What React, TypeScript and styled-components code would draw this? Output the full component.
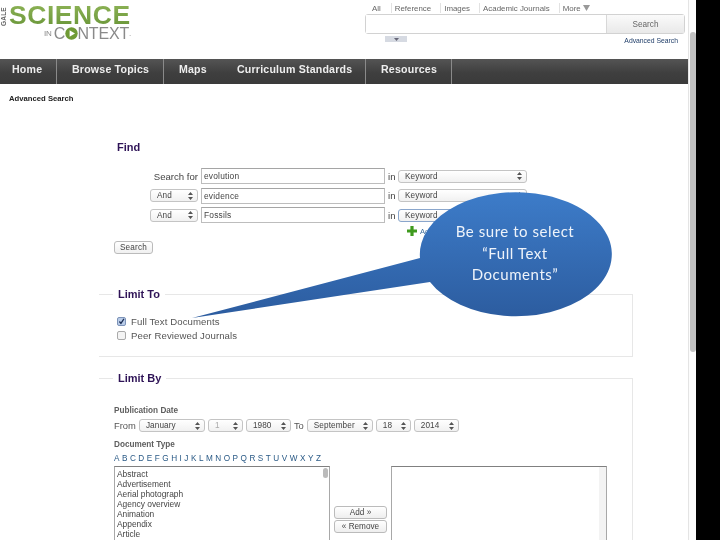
import React from 'react'
import styled, { createGlobalStyle } from 'styled-components'

const Global = createGlobalStyle`
  html, body { margin: 0; padding: 0; background: #000; overflow: hidden; }
  body { font-family: "Liberation Sans", Arial, sans-serif; color: #333; }
  * { box-sizing: border-box; }
`

const tabs = ['Reference', 'Images', 'Academic Journals']
const navItems = [
  { label: 'Home', width: 57 },
  { label: 'Browse Topics', width: 107 },
  { label: 'Maps', width: 58, plain: true },
  { label: 'Curriculum Standards', width: 144 },
  { label: 'Resources', width: 86 },
]
const letters = 'ABCDEFGHIJKLMNOPQRSTUVWXYZ'.split('')
const docTypes = ['Abstract', 'Advertisement', 'Aerial photograph', 'Agency overview', 'Animation', 'Appendix', 'Article']

function Arrows() {
  return (
    <svg width="5" height="8" viewBox="0 0 5 8">
      <path d="M2.5 0 L5 3 H0 Z M2.5 8 L5 5 H0 Z" fill="#555" />
    </svg>
  )
}

function Select({ value, width, focus, muted }: { value: string; width: number; focus?: boolean; muted?: boolean }) {
  return (
    <SelectBox $width={width} $focus={focus} $muted={muted}>
      <span>{value}</span>
      <Arrows />
    </SelectBox>
  )
}

function QueryRow({ value, bool, focus }: { value: string; bool?: boolean; focus?: boolean }) {
  return (
    <Row>
      <RowLead>
        {bool ? <Select value="And" width={48} /> : <span>Search for</span>}
      </RowLead>
      <TermInput defaultValue={value} readOnly />
      <InWord>in</InWord>
      <Select value="Keyword" width={129} focus={focus} />
    </Row>
  )
}

export default function App() {
  return (
    <Screen>
      <Global />
      <Main>
        <Header>
          <Logo>
            <Gale>GALE</Gale>
            <LogoWords>
              <Science>SCIENCE</Science>
              <Context>
                <small>IN</small>C
                <svg width="13" height="13" viewBox="0 0 13 13">
                  <circle cx="6.5" cy="6.5" r="6.2" fill="#6f9a35" />
                  <path d="M4.6 3.2 L10 6.5 L4.6 9.8 Z" fill="#fff" />
                </svg>
                NTEXT<small>.</small>
              </Context>
            </LogoWords>
          </Logo>
          <SearchArea>
            <Tabs>
              <Tab $first>All</Tab>
              {tabs.map((t) => (
                <Tab key={t}>{t}</Tab>
              ))}
              <Tab>
                More
                <svg width="7" height="6" viewBox="0 0 7 6">
                  <path d="M0 0 H7 L3.5 6 Z" fill="#999" />
                </svg>
              </Tab>
            </Tabs>
            <SearchBox>
              <SearchField />
              <SearchButton>Search</SearchButton>
            </SearchBox>
            <SearchFoot>
              <DropTab>
                <svg width="5" height="3" viewBox="0 0 5 3">
                  <path d="M0 0 H5 L2.5 3 Z" fill="#667" />
                </svg>
              </DropTab>
              <AdvancedLink>Advanced Search</AdvancedLink>
            </SearchFoot>
          </SearchArea>
        </Header>

        <Nav>
          {navItems.map((n) => (
            <NavItem key={n.label} $width={n.width} $plain={n.plain}>
              {n.label}
            </NavItem>
          ))}
        </Nav>

        <Crumb>Advanced Search</Crumb>

        <Form>
          <FindTitle>Find</FindTitle>
          <Rows>
            <QueryRow value="evolution" />
            <QueryRow value="evidence" bool />
            <QueryRow value="Fossils" bool focus />
          </Rows>
          <AddRow>
            <svg width="10" height="10" viewBox="0 0 10 10">
              <path d="M3.4 0 H6.6 V3.4 H10 V6.6 H6.6 V10 H3.4 V6.6 H0 V3.4 H3.4 Z" fill="#3f9a1e" />
            </svg>
            <span>Add a Row</span>
          </AddRow>
          <GreyButton $width={39}>Search</GreyButton>

          <LimitTo>
            <Legend>Limit To</Legend>
            <CheckRow>
              <CheckBox $on>
                <svg width="9" height="9" viewBox="0 0 9 9">
                  <path d="M1.8 4.5 L3.8 7 L7.6 1.2" fill="none" stroke="#1d2f55" strokeWidth="1.6" />
                </svg>
              </CheckBox>
              Full Text Documents
            </CheckRow>
            <CheckRow>
              <CheckBox />
              Peer Reviewed Journals
            </CheckRow>
          </LimitTo>

          <LimitBy>
            <Legend>Limit By</Legend>
            <SubHead $top={27}>Publication Date</SubHead>
            <DateRow>
              <span>From</span>
              <Select value="January" width={66} />
              <Select value="1" width={35} muted />
              <Select value="1980" width={45} />
              <span>To</span>
              <Select value="September" width={66} />
              <Select value="18" width={35} />
              <Select value="2014" width={45} />
            </DateRow>
            <SubHead $top={8}>Document Type</SubHead>
            <Letters>
              {letters.map((l) => (
                <span key={l}>{l}</span>
              ))}
            </Letters>
            <Lists>
              <ListBox>
                {docTypes.map((d) => (
                  <div key={d}>{d}</div>
                ))}
                <ListThumb />
              </ListBox>
              <ListActions>
                <ActionButton>Add »</ActionButton>
                <ActionButton>« Remove</ActionButton>
              </ListActions>
              <ChosenBox />
            </Lists>
          </LimitBy>
        </Form>

        <Callout>
          <CalloutShape viewBox="0 0 440 140" width="440" height="140">
            <defs>
              <linearGradient id="bubble" x1="0" y1="0" x2="0" y2="1">
                <stop offset="0" stopColor="#3d7cc9" />
                <stop offset="1" stopColor="#2c5c9f" />
              </linearGradient>
            </defs>
            <path
              d="M0 127 L228 67 A96 62 0 1 1 238 91 Z"
              fill="url(#bubble)"
              stroke="none"
            />
          </CalloutShape>
          <CalloutText>
            Be sure to select
            <br />
            “Full Text
            <br />
            Documents”
          </CalloutText>
        </Callout>
      </Main>
      <ScrollTrack>
        <ScrollThumb />
      </ScrollTrack>
    </Screen>
  )
}

const Screen = styled.div`
  position: relative;
  display: flex;
  width: 720px;
  height: 540px;
  overflow: hidden;
  background: #000;
`

const Main = styled.div`
  width: 688px;
  height: 540px;
  overflow: hidden;
  background: #fff;
  filter: blur(0.3px);
`

const ScrollTrack = styled.div`
  width: 8px;
  height: 540px;
  padding: 32px 1px 0;
  background: #fcfcfc;
  border-left: 1px solid #e4e4e4;
`

const ScrollThumb = styled.div`
  width: 6px;
  height: 320px;
  border-radius: 3px;
  background: #c2c2c2;
`

const Header = styled.div`
  display: flex;
  justify-content: space-between;
  height: 59px;
  padding-right: 3px;
`

const Logo = styled.div`
  display: flex;
  align-items: flex-start;
  padding-top: 4px;
`

const Gale = styled.div`
  writing-mode: vertical-rl;
  transform: rotate(180deg);
  width: 8px;
  height: 22px;
  font-size: 6.5px;
  font-weight: bold;
  letter-spacing: 0.2px;
  text-align: left;
  color: #666;
`

const LogoWords = styled.div`
  display: flex;
  flex-direction: column;
  align-items: flex-end;
  margin-left: 1px;
`

const Science = styled.div`
  width: 124px;
  height: 23px;
  font-size: 26.5px;
  line-height: 23px;
  font-weight: bold;
  letter-spacing: 0.55px;
  white-space: nowrap;
  color: transparent;
  background: linear-gradient(#8cb255, #6a9639);
  -webkit-background-clip: text;
  background-clip: text;
`

const Context = styled.div`
  display: flex;
  align-items: center;
  height: 13px;
  font-size: 16px;
  line-height: 13px;
  letter-spacing: -0.2px;
  color: #8a8a8a;

  small {
    font-size: 8px;
    margin-right: 2px;
    align-self: center;
  }
  svg {
    margin: 0 -0.5px 0 0;
  }
`

const SearchArea = styled.div`
  display: flex;
  flex-direction: column;
  width: 320px;
  padding-top: 3px;
`

const Tabs = styled.div`
  display: flex;
  height: 11px;
  padding-left: 7px;
`

const Tab = styled.div<{ $first?: boolean }>`
  display: flex;
  align-items: center;
  gap: 2px;
  height: 10px;
  padding: 0 ${(p) => (p.$first ? '10px' : '9px')} 0 ${(p) => (p.$first ? '0' : '3px')};
  border-left: ${(p) => (p.$first ? 'none' : '1px solid #e2e2e2')};
  font-size: 7.9px;
  white-space: nowrap;
  color: #666;
`

const SearchBox = styled.div`
  display: flex;
  height: 20px;
  border: 1px solid #d2d2d2;
  border-radius: 3px;
`

const SearchField = styled.div`
  flex: 1;
  background: #fff;
`

const SearchButton = styled.div`
  display: flex;
  align-items: center;
  justify-content: center;
  width: 78px;
  font-size: 8.2px;
  color: #666;
  background: linear-gradient(#fafafa, #e9e9e9);
  border-left: 1px solid #d8d8d8;
`

const SearchFoot = styled.div`
  display: flex;
  justify-content: space-between;
  padding: 2px 7px 0 20px;
`

const DropTab = styled.div`
  display: flex;
  align-items: center;
  justify-content: center;
  width: 22px;
  height: 6px;
  background: #d6dae2;
`

const AdvancedLink = styled.div`
  margin-top: 1px;
  font-size: 6.8px;
  color: #23406b;
`

const Nav = styled.div`
  display: flex;
  height: 25px;
  background: linear-gradient(#545454, #3f3f3f 55%, #3a3a3a);
`

const NavItem = styled.div<{ $width: number; $plain?: boolean }>`
  width: ${(p) => p.$width}px;
  padding-left: ${(p) => (p.$width === 57 ? 12 : 15)}px;
  border-right: ${(p) => (p.$plain ? 'none' : '1px solid #8a8a8a')};
  font-size: 10.6px;
  line-height: 21px;
  font-weight: bold;
  letter-spacing: 0.2px;
  white-space: nowrap;
  color: #eee;
`

const Crumb = styled.div`
  padding: 9px 0 0 9px;
  height: 29px;
  font-size: 7.7px;
  line-height: 11px;
  font-weight: bold;
  color: #222;
`

const Form = styled.div`
  width: 536px;
  margin-left: 97px;
  padding-top: 28px;
`

const FindTitle = styled.div`
  height: 27px;
  margin-left: 20px;
  font-size: 11px;
  line-height: 12px;
  font-weight: bold;
  color: #2f1457;
`

const Rows = styled.div`
  display: flex;
  flex-direction: column;
  gap: 3.5px;
  padding-left: 53px;
`

const Row = styled.div`
  display: flex;
  align-items: center;
  height: 16px;
`

const RowLead = styled.div`
  display: flex;
  justify-content: flex-end;
  width: 48px;
  margin-right: 3px;
  font-size: 9.6px;
  white-space: nowrap;
  color: #444;
`

const TermInput = styled.input`
  width: 184px;
  height: 16px;
  padding: 0 2px;
  border: 1px solid #bdbdbd;
  border-top-color: #a5a5a5;
  border-radius: 0;
  outline: none;
  font-family: inherit;
  font-size: 8.4px;
  letter-spacing: 0.2px;
  color: #444;
`

const InWord = styled.span`
  width: 13px;
  padding-left: 3px;
  font-size: 9.6px;
  color: #444;
`

const SelectBox = styled.div<{ $width: number; $focus?: boolean; $muted?: boolean }>`
  display: flex;
  flex-shrink: 0;
  align-items: center;
  justify-content: space-between;
  width: ${(p) => p.$width}px;
  height: 13px;
  padding: 0 4px 0 6px;
  border: 1px solid ${(p) => (p.$focus ? '#8aa6cc' : '#c4c4c4')};
  border-radius: 3px;
  background: linear-gradient(#fff, #f1f1f1);
  font-size: 8.2px;
  letter-spacing: 0.1px;
  white-space: nowrap;
  color: ${(p) => (p.$muted ? '#aaa' : '#444')};
`

const AddRow = styled.div`
  display: flex;
  align-items: center;
  gap: 3px;
  height: 12px;
  margin: 2px 0 0 310px;
  font-size: 7.6px;
  white-space: nowrap;
  color: #3f6f9f;
`

const GreyButton = styled.div<{ $width: number }>`
  display: flex;
  align-items: center;
  justify-content: center;
  width: ${(p) => p.$width}px;
  height: 13px;
  margin: 4px 0 0 17px;
  border: 1px solid #bbb;
  border-radius: 3px;
  background: linear-gradient(#fff, #f0f0f0);
  font-size: 8.2px;
  letter-spacing: 0.2px;
  color: #444;
`

const Fieldset = styled.div`
  position: relative;
  margin-left: 2px;
  border-top: 1px solid #e7e7e7;
  border-right: 1px solid #e7e7e7;
`

const LimitTo = styled(Fieldset)`
  height: 63px;
  margin-top: 40px;
  padding: 19px 0 0 18px;
  border-bottom: 1px solid #e7e7e7;
`

const LimitBy = styled(Fieldset)`
  height: 240px;
  margin-top: 21px;
  padding-left: 15px;
`

const Legend = styled.div`
  position: absolute;
  top: -7px;
  left: 14px;
  padding: 0 5px;
  background: #fff;
  font-size: 11px;
  line-height: 12px;
  font-weight: bold;
  color: #2f1457;
`

const CheckRow = styled.div`
  display: flex;
  align-items: center;
  gap: 5px;
  height: 14px;
  font-size: 9.6px;
  letter-spacing: 0.1px;
  color: #555;
`

const CheckBox = styled.div<{ $on?: boolean }>`
  display: flex;
  align-items: center;
  justify-content: center;
  width: 9px;
  height: 9px;
  border: 1px solid ${(p) => (p.$on ? '#7d93b8' : '#aaa')};
  border-radius: 2px;
  background: ${(p) => (p.$on ? '#b9cce8' : '#f4f4f4')};
`

const SubHead = styled.div<{ $top: number }>`
  margin-top: ${(p) => p.$top}px;
  height: 10px;
  font-size: 8.2px;
  line-height: 10px;
  font-weight: bold;
  color: #5e5e5e;
`

const DateRow = styled.div`
  display: flex;
  align-items: center;
  gap: 3px;
  height: 13px;
  margin-top: 3px;
  font-size: 9.4px;
  color: #555;
`

const Letters = styled.div`
  display: flex;
  justify-content: space-between;
  width: 207px;
  height: 10px;
  margin-top: 4px;
  font-size: 8.2px;
  line-height: 10px;
  color: #2a5a86;
`

const Lists = styled.div`
  display: flex;
  margin-top: 2px;
`

const ListBox = styled.div`
  position: relative;
  width: 216px;
  height: 90px;
  padding: 2px 0 0 2px;
  border: 1px solid #a8a8a8;
  border-top-color: #808080;
  font-size: 8.4px;
  line-height: 10px;
  color: #444;
`

const ListThumb = styled.div`
  position: absolute;
  top: 1px;
  right: 1px;
  width: 5px;
  height: 10px;
  border-radius: 3px;
  background: #bbb;
`

const ListActions = styled.div`
  display: flex;
  flex-direction: column;
  gap: 1px;
  padding: 40px 4px 0 4px;
`

const ActionButton = styled.div`
  display: flex;
  align-items: center;
  justify-content: center;
  width: 53px;
  height: 13px;
  border: 1px solid #bbb;
  border-radius: 3px;
  background: linear-gradient(#fff, #eee);
  font-size: 8.2px;
  color: #444;
`

const ChosenBox = styled.div`
  width: 216px;
  height: 90px;
  border: 1px solid #a8a8a8;
  border-top-color: #808080;
  background: linear-gradient(90deg, #fff 207px, #f3f3f3 207px);
`

const Callout = styled.div`
  position: absolute;
  left: 192px;
  top: 191px;
  width: 420px;
  height: 124px;
`

const CalloutShape = styled.svg`
  position: absolute;
  left: 0;
  top: 0;
  overflow: visible;
`

const CalloutText = styled.div`
  position: absolute;
  left: 227px;
  top: 30px;
  width: 192px;
  font-family: Lato, "Open Sans", sans-serif;
  font-size: 15px;
  line-height: 21.5px;
  letter-spacing: 0.55px;
  text-align: center;
  color: #eef3fa;
`
